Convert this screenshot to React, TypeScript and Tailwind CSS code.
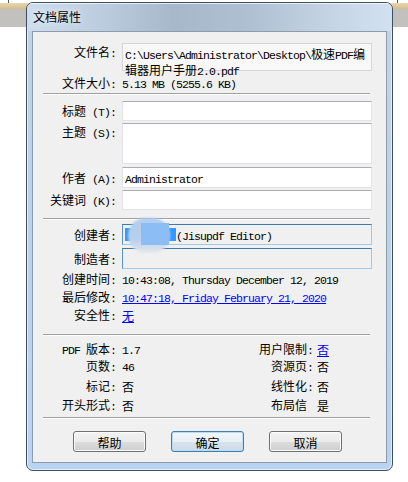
import React from "react";

const CJK = /[\u3000-\u9fff\uff00-\uffef]/;

// SimSun-like mix: CJK at 12px, ascii as 6px-wide mono
function Mix({ s, className = "" }: { s: string; className?: string }) {
  const parts = s.match(/[\u3000-\u9fff\uff00-\uffef]+|[^\u3000-\u9fff\uff00-\uffef]+/g) || [];
  return (
    <span className={className}>
      {parts.map((p, i) =>
        CJK.test(p) ? (
          <span key={i} className="text-[12px] font-['Noto_Sans_CJK_SC',sans-serif]">
            {p}
          </span>
        ) : (
          <span key={i} className="text-[11.5px] tracking-[-0.9px] font-['Liberation_Mono',monospace] whitespace-pre">
            {p}
          </span>
        )
      )}
    </span>
  );
}

function Row({
  label,
  children,
  className = "",
}: {
  label: string;
  children?: React.ReactNode;
  className?: string;
}) {
  return (
    <div className={`flex items-center shrink-0 leading-[14px] ${className}`}>
      <div className="w-[83px] shrink-0 text-right">
        <Mix s={label} />
      </div>
      <div className="ml-[6px] flex-1 min-w-0">{children}</div>
    </div>
  );
}

function Input({ h, text }: { h: string; text?: string }) {
  return (
    <div
      className={`w-[250px] ${h} bg-white border border-[#e2e3ea] border-t-[#abadb3] pl-[2px] flex items-center`}
    >
      {text && <Mix s={text} />}
    </div>
  );
}

function Separator({ className = "" }: { className?: string }) {
  return (
    <div className={`ml-[10px] w-[327px] shrink-0 ${className}`}>
      <div className="h-px bg-[#a0a0a0]" />
      <div className="h-px bg-white" />
    </div>
  );
}

function Button({ label, primary }: { label: string; primary?: boolean }) {
  return (
    <div
      className={`w-[73px] h-[21px] rounded-[3px] border flex items-center justify-center leading-[14px] ${
        primary
          ? "border-[#3c7fb1] bg-[linear-gradient(180deg,#f1f6fa_0%,#e8eff5_50%,#d8e4ed_50%,#cddbe6_100%)] shadow-[inset_0_0_0_1px_#b9dcf3]"
          : "border-[#707070] bg-[linear-gradient(180deg,#f2f2f2_0%,#ebebeb_50%,#dddddd_50%,#cfcfcf_100%)] shadow-[inset_0_0_0_1px_#fbfbfb]"
      }`}
    >
      <Mix s={label} />
    </div>
  );
}

function InfoRow({
  left,
  leftValue,
  right,
  rightValue,
  link,
  className = "",
}: {
  left: string;
  leftValue: string;
  right: string;
  rightValue: string;
  link?: boolean;
  className?: string;
}) {
  return (
    <div className={`flex items-center leading-[14px] shrink-0 ${className}`}>
      <div className="w-[83px] shrink-0 text-right">
        <Mix s={left} />
      </div>
      <div className="ml-[6px] flex-1">
        <Mix s={leftValue} />
      </div>
      <div className="text-right pr-[4px]">
        <Mix s={right} />
      </div>
      <div className="w-[69px]">
        <Mix s={rightValue} className={link ? "text-[#0000ff] underline" : ""} />
      </div>
    </div>
  );
}

export default function App() {
  return (
    <div className="relative w-[408px] h-[482px] bg-white overflow-hidden text-black font-['Noto_Sans_CJK_SC',sans-serif]">
      {/* background app strip */}
      <div className="flex flex-col">
        <div className="h-[3px] bg-white relative">
          <div className="absolute left-[8px] top-0 w-px h-[3px] bg-[#555]" />
          <div className="absolute left-[397px] top-0 w-px h-[3px] bg-[#555]" />
        </div>
        <div className="h-[6px] bg-[linear-gradient(180deg,#e9d8b4,#d4bb8c)]" />
        <div className="h-[18px] bg-[#c3c1bd]" />
      </div>

      {/* dialog window */}
      <div className="absolute left-[26px] top-[2px] w-[367px] h-[469px] rounded-[7px] border border-[#3e4d60] overflow-hidden flex flex-col bg-[linear-gradient(180deg,#c4d3e3_0%,#bdd1e7_35%,#b8d4f2_100%)] shadow-[inset_0_0_0_1px_rgba(255,255,255,0.6)]">
        <div className="h-[28px] shrink-0 flex items-center pl-[6px] bg-[linear-gradient(90deg,#cfdeee_0%,#bccddf_20%,#a7b8ca_40%,#aebfd1_60%,#c6d6e7_85%,#d2e1f1_100%)] shadow-[inset_0_1px_0_rgba(255,255,255,0.7)]">
          <span className="text-[12px] leading-[14px] [text-shadow:0_0_6px_#ffffff]">文档属性</span>
        </div>

        <div className="flex-1 px-[5px] pb-[7px] flex flex-col">
          <div className="flex-1 border border-[#8d9cad] bg-[#f0f0f0] flex flex-col">
            <Row label="文件名:" className="mt-[11px] !items-start">
              <div className="w-[250px] h-[28px] bg-[#f8f8f8] border border-[#d6d6d6] pl-[2px] pt-[2px] leading-[13px]">
                <div>
                  <Mix s="C:\Users\Administrator\Desktop\极速PDF编" />
                </div>
                <div>
                  <Mix s="辑器用户手册2.0.pdf" />
                </div>
              </div>
            </Row>
            <Row label="文件大小:" className="mt-[5px] h-[14px]">
              <Mix s="5.13 MB (5255.6 KB)" />
            </Row>

            <Separator className="mt-[3px]" />

            <Row label="标题 (T):" className="mt-[6px]">
              <Input h="h-[20px]" />
            </Row>
            <Row label="主题 (S):" className="mt-[2px] !items-start">
              <div className="pt-0">
                <Input h="h-[41px]" />
              </div>
            </Row>
            <Row label="作者 (A):" className="mt-[3px]">
              <Input h="h-[21px]" text="Administrator" />
            </Row>
            <Row label="关键词 (K):" className="mt-[2px]">
              <Input h="h-[20px]" />
            </Row>

            <Separator className="mt-[8px]" />

            <Row label="创建者:" className="mt-[4px]">
              <div className="relative w-[250px] h-[21px] bg-[#f0f0f0] border border-[#a4c9e3] border-t-[#3d7bad] border-l-[#5a92c2] pl-[2px] flex items-center">
                <span className="inline-block w-[51px] h-[13px] bg-[#3399ff]" />
                <Mix s="(Jisupdf Editor)" />
                <div className="absolute left-[5px] top-[-7px] w-[42px] h-[35px] rounded-full bg-[linear-gradient(180deg,#b2cfef_0%,#b6d0ee_60%,#e4e8ed_100%)] blur-[1px]" />
                <div className="absolute left-[18px] top-[-2px] w-[28px] h-[22px] bg-[#8cbdf4] blur-[0.5px]" />
              </div>
            </Row>
            <Row label="制造者:" className="mt-[3px]">
              <div className="w-[250px] h-[21px] bg-[#f0f0f0] border border-[#a4c9e3] border-t-[#3d7bad] border-l-[#5a92c2]" />
            </Row>

            <Row label="创建时间:" className="mt-[3px] h-[14px]">
              <Mix s="10:43:08, Thursday December 12, 2019" />
            </Row>
            <Row label="最后修改:" className="mt-[4px] h-[14px]">
              <Mix s="10:47:18, Friday February 21, 2020" className="text-[#0000ff] underline" />
            </Row>
            <Row label="安全性:" className="mt-[4px] h-[14px]">
              <Mix s="无" className="text-[#0000ff] underline" />
            </Row>

            <Separator className="mt-[12px]" />

            <InfoRow left="PDF 版本:" leftValue="1.7" right="用户限制:" rightValue="否" link className="mt-[6px] h-[14px]" />
            <InfoRow left="页数:" leftValue="46" right="资源页:" rightValue="否" className="mt-[3px] h-[14px]" />
            <InfoRow left="标记:" leftValue="否" right="线性化:" rightValue="否" className="mt-[6px] h-[14px]" />
            <InfoRow left="开头形式:" leftValue="否" right="布局信 " rightValue="是" className="mt-[5px] h-[14px]" />

            <Separator className="mt-[5px]" />

            <div className="mt-[12px] pl-[40px] flex gap-[25px]">
              <Button label="帮助" />
              <Button label="确定" primary />
              <Button label="取消" />
            </div>
          </div>
        </div>
      </div>
    </div>
  );
}
